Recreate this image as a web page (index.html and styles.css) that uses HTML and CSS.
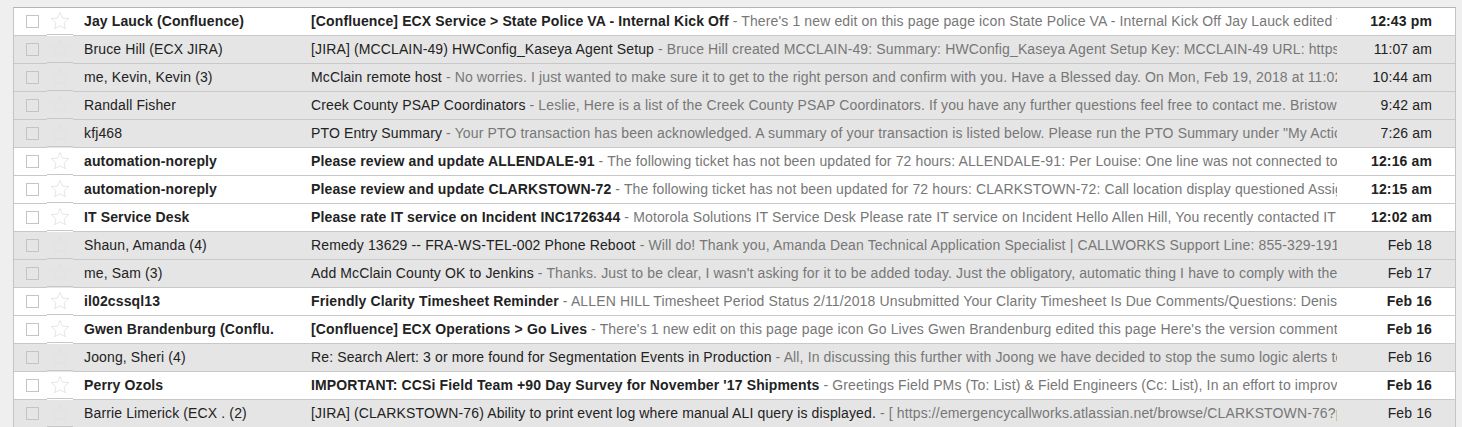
FILE: index.html
```html
<!DOCTYPE html>
<html>
<head>
<meta charset="utf-8">
<link rel="stylesheet" href="styles.css">
</head>
<body>
<div class="inbox">
  <div class="row unread">
    <div class="cell check"><span class="box"></span></div>
    <div class="cell star"><svg viewBox="0 0 20 20"><path d="M10 1.5l2.5 5.6 6.1.6-4.6 4.1 1.3 6-5.3-3.1-5.3 3.1 1.3-6-4.6-4.1 6.1-.6z"/></svg></div>
    <div class="cell sender">Jay Lauck (Confluence)</div>
    <div class="cell subject"><span class="subj">[Confluence] ECX Service &gt; State Police VA - Internal Kick Off</span><span class="snip"> - There's 1 new edit on this page page icon State Police VA - Internal Kick Off Jay Lauck edited this page Here's the version comment</span></div>
    <div class="cell date">12:43 pm</div>
  </div>
  <div class="row">
    <div class="cell check"><span class="box"></span></div>
    <div class="cell star"><svg viewBox="0 0 20 20"><path d="M10 1.5l2.5 5.6 6.1.6-4.6 4.1 1.3 6-5.3-3.1-5.3 3.1 1.3-6-4.6-4.1 6.1-.6z"/></svg></div>
    <div class="cell sender">Bruce Hill (ECX JIRA)</div>
    <div class="cell subject"><span class="subj">[JIRA] (MCCLAIN-49) HWConfig_Kaseya Agent Setup</span><span class="snip"> - Bruce Hill created MCCLAIN-49: Summary: HWConfig_Kaseya Agent Setup Key: MCCLAIN-49 URL: https://emergencycallworks.atlassian.net</span></div>
    <div class="cell date">11:07 am</div>
  </div>
  <div class="row">
    <div class="cell check"><span class="box"></span></div>
    <div class="cell star"><svg viewBox="0 0 20 20"><path d="M10 1.5l2.5 5.6 6.1.6-4.6 4.1 1.3 6-5.3-3.1-5.3 3.1 1.3-6-4.6-4.1 6.1-.6z"/></svg></div>
    <div class="cell sender">me, Kevin, Kevin (3)</div>
    <div class="cell subject"><span class="subj">McClain remote host</span><span class="snip"> - No worries. I just wanted to make sure it to get to the right person and confirm with you. Have a Blessed day. On Mon, Feb 19, 2018 at 11:02 AM</span></div>
    <div class="cell date">10:44 am</div>
  </div>
  <div class="row">
    <div class="cell check"><span class="box"></span></div>
    <div class="cell star"><svg viewBox="0 0 20 20"><path d="M10 1.5l2.5 5.6 6.1.6-4.6 4.1 1.3 6-5.3-3.1-5.3 3.1 1.3-6-4.6-4.1 6.1-.6z"/></svg></div>
    <div class="cell sender">Randall Fisher</div>
    <div class="cell subject"><span class="subj">Creek County PSAP Coordinators</span><span class="snip"> - Leslie, Here is a list of the Creek County PSAP Coordinators. If you have any further questions feel free to contact me. Bristow Police Department</span></div>
    <div class="cell date">9:42 am</div>
  </div>
  <div class="row">
    <div class="cell check"><span class="box"></span></div>
    <div class="cell star"><svg viewBox="0 0 20 20"><path d="M10 1.5l2.5 5.6 6.1.6-4.6 4.1 1.3 6-5.3-3.1-5.3 3.1 1.3-6-4.6-4.1 6.1-.6z"/></svg></div>
    <div class="cell sender">kfj468</div>
    <div class="cell subject"><span class="subj">PTO Entry Summary</span><span class="snip"> - Your PTO transaction has been acknowledged. A summary of your transaction is listed below. Please run the PTO Summary under "My Actions" to view</span></div>
    <div class="cell date">7:26 am</div>
  </div>
  <div class="row unread">
    <div class="cell check"><span class="box"></span></div>
    <div class="cell star"><svg viewBox="0 0 20 20"><path d="M10 1.5l2.5 5.6 6.1.6-4.6 4.1 1.3 6-5.3-3.1-5.3 3.1 1.3-6-4.6-4.1 6.1-.6z"/></svg></div>
    <div class="cell sender">automation-noreply</div>
    <div class="cell subject"><span class="subj">Please review and update ALLENDALE-91</span><span class="snip"> - The following ticket has not been updated for 72 hours: ALLENDALE-91: Per Louise: One line was not connected to the system</span></div>
    <div class="cell date">12:16 am</div>
  </div>
  <div class="row unread">
    <div class="cell check"><span class="box"></span></div>
    <div class="cell star"><svg viewBox="0 0 20 20"><path d="M10 1.5l2.5 5.6 6.1.6-4.6 4.1 1.3 6-5.3-3.1-5.3 3.1 1.3-6-4.6-4.1 6.1-.6z"/></svg></div>
    <div class="cell sender">automation-noreply</div>
    <div class="cell subject"><span class="subj">Please review and update CLARKSTOWN-72</span><span class="snip"> - The following ticket has not been updated for 72 hours: CLARKSTOWN-72: Call location display questioned Assignee: Allen Hill</span></div>
    <div class="cell date">12:15 am</div>
  </div>
  <div class="row unread">
    <div class="cell check"><span class="box"></span></div>
    <div class="cell star"><svg viewBox="0 0 20 20"><path d="M10 1.5l2.5 5.6 6.1.6-4.6 4.1 1.3 6-5.3-3.1-5.3 3.1 1.3-6-4.6-4.1 6.1-.6z"/></svg></div>
    <div class="cell sender">IT Service Desk</div>
    <div class="cell subject"><span class="subj">Please rate IT service on Incident INC1726344</span><span class="snip"> - Motorola Solutions IT Service Desk Please rate IT service on Incident Hello Allen Hill, You recently contacted IT Service Desk</span></div>
    <div class="cell date">12:02 am</div>
  </div>
  <div class="row">
    <div class="cell check"><span class="box"></span></div>
    <div class="cell star"><svg viewBox="0 0 20 20"><path d="M10 1.5l2.5 5.6 6.1.6-4.6 4.1 1.3 6-5.3-3.1-5.3 3.1 1.3-6-4.6-4.1 6.1-.6z"/></svg></div>
    <div class="cell sender">Shaun, Amanda (4)</div>
    <div class="cell subject"><span class="subj">Remedy 13629 -- FRA-WS-TEL-002 Phone Reboot</span><span class="snip"> - Will do! Thank you, Amanda Dean Technical Application Specialist | CALLWORKS Support Line: 855-329-1911 Email</span></div>
    <div class="cell date">Feb 18</div>
  </div>
  <div class="row">
    <div class="cell check"><span class="box"></span></div>
    <div class="cell star"><svg viewBox="0 0 20 20"><path d="M10 1.5l2.5 5.6 6.1.6-4.6 4.1 1.3 6-5.3-3.1-5.3 3.1 1.3-6-4.6-4.1 6.1-.6z"/></svg></div>
    <div class="cell sender">me, Sam (3)</div>
    <div class="cell subject"><span class="subj">Add McClain County OK to Jenkins</span><span class="snip"> - Thanks. Just to be clear, I wasn't asking for it to be added today. Just the obligatory, automatic thing I have to comply with the process</span></div>
    <div class="cell date">Feb 17</div>
  </div>
  <div class="row unread">
    <div class="cell check"><span class="box"></span></div>
    <div class="cell star"><svg viewBox="0 0 20 20"><path d="M10 1.5l2.5 5.6 6.1.6-4.6 4.1 1.3 6-5.3-3.1-5.3 3.1 1.3-6-4.6-4.1 6.1-.6z"/></svg></div>
    <div class="cell sender">il02cssql13</div>
    <div class="cell subject"><span class="subj">Friendly Clarity Timesheet Reminder</span><span class="snip"> - ALLEN HILL Timesheet Period Status 2/11/2018 Unsubmitted Your Clarity Timesheet Is Due Comments/Questions: Denise Smith</span></div>
    <div class="cell date">Feb 16</div>
  </div>
  <div class="row unread">
    <div class="cell check"><span class="box"></span></div>
    <div class="cell star"><svg viewBox="0 0 20 20"><path d="M10 1.5l2.5 5.6 6.1.6-4.6 4.1 1.3 6-5.3-3.1-5.3 3.1 1.3-6-4.6-4.1 6.1-.6z"/></svg></div>
    <div class="cell sender">Gwen Brandenburg (Conflu.</div>
    <div class="cell subject"><span class="subj">[Confluence] ECX Operations &gt; Go Lives</span><span class="snip"> - There's 1 new edit on this page page icon Go Lives Gwen Brandenburg edited this page Here's the version comment: updated</span></div>
    <div class="cell date">Feb 16</div>
  </div>
  <div class="row">
    <div class="cell check"><span class="box"></span></div>
    <div class="cell star"><svg viewBox="0 0 20 20"><path d="M10 1.5l2.5 5.6 6.1.6-4.6 4.1 1.3 6-5.3-3.1-5.3 3.1 1.3-6-4.6-4.1 6.1-.6z"/></svg></div>
    <div class="cell sender">Joong, Sheri (4)</div>
    <div class="cell subject"><span class="subj">Re: Search Alert: 3 or more found for Segmentation Events in Production</span><span class="snip"> - All, In discussing this further with Joong we have decided to stop the sumo logic alerts to the team</span></div>
    <div class="cell date">Feb 16</div>
  </div>
  <div class="row unread">
    <div class="cell check"><span class="box"></span></div>
    <div class="cell star"><svg viewBox="0 0 20 20"><path d="M10 1.5l2.5 5.6 6.1.6-4.6 4.1 1.3 6-5.3-3.1-5.3 3.1 1.3-6-4.6-4.1 6.1-.6z"/></svg></div>
    <div class="cell sender">Perry Ozols</div>
    <div class="cell subject"><span class="subj">IMPORTANT: CCSi Field Team +90 Day Survey for November '17 Shipments</span><span class="snip"> - Greetings Field PMs (To: List) &amp; Field Engineers (Cc: List), In an effort to improve our</span></div>
    <div class="cell date">Feb 16</div>
  </div>
  <div class="row">
    <div class="cell check"><span class="box"></span></div>
    <div class="cell star"><svg viewBox="0 0 20 20"><path d="M10 1.5l2.5 5.6 6.1.6-4.6 4.1 1.3 6-5.3-3.1-5.3 3.1 1.3-6-4.6-4.1 6.1-.6z"/></svg></div>
    <div class="cell sender">Barrie Limerick (ECX . (2)</div>
    <div class="cell subject"><span class="subj">[JIRA] (CLARKSTOWN-76) Ability to print event log where manual ALI query is displayed.</span><span class="snip"> - [ https://emergencycallworks.atlassian.net/browse/CLARKSTOWN-76?page=com.atlassian</span></div>
    <div class="cell date">Feb 16</div>
  </div>
</div>
</body>
</html>
```

FILE: styles.css
```css
html, body {
  margin: 0;
  height: 100%;
  overflow: hidden;
}
body {
  background: #efefef;
  padding: 7px 6px 0 13px;
  font-family: "Liberation Sans", Arial, sans-serif;
  font-size: 14px;
  letter-spacing: 0.13px;
  color: #222;
}
.inbox {
  width: 1441px;
  border-top: 1px solid #b4b4b4;
  border-left: 1px solid #c4c4c4;
  border-right: 1px solid #c4c4c4;
}
.row {
  --row-bg: #e5e5e5;
  display: flex;
  height: 27px;
  border-bottom: 1px solid #c8c8c8;
  background: var(--row-bg);
  line-height: 27px;
  white-space: nowrap;
}
.row.unread {
  --row-bg: #ffffff;
  font-weight: bold;
}
.cell {
  overflow: hidden;
  flex: none;
}
.check {
  width: 33px;
  padding-left: 12px;
  box-sizing: border-box;
  display: flex;
  align-items: flex-start;
}
.box {
  display: block;
  width: 11px;
  height: 11px;
  margin-top: 7px;
  border: 1px solid #c4c4c4;
}
.star {
  width: 26px;
  position: relative;
  overflow: visible;
  padding-left: 3px;
  box-sizing: border-box;
}
.star::after {
  content: "";
  position: absolute;
  left: 0;
  right: 0;
  bottom: -1px;
  height: 1px;
  border-top: 1px solid #c8c8c8;
  background: var(--row-bg);
}
.star svg {
  display: block;
  width: 20px;
  height: 20px;
  margin-top: 3px;
  fill: none;
  stroke: #e0e0e0;
  stroke-width: 0.8;
}
.sender {
  width: 230px;
  padding: 0 8px 0 11px;
  box-sizing: border-box;
}
.subject {
  width: 1034px;
  padding-left: 8px;
  box-sizing: border-box;
}
.subj {
  color: #222;
}
.snip {
  color: #777;
  font-weight: normal;
}
.date {
  width: 118px;
  padding-right: 23px;
  box-sizing: border-box;
  text-align: right;
}
```
